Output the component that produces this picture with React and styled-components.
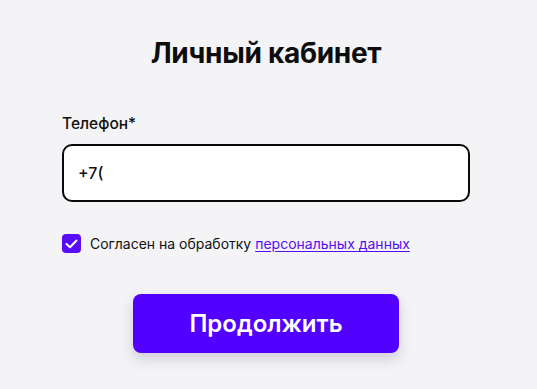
import React, { useState } from "react";
import styled, { createGlobalStyle } from "styled-components";

const GlobalStyle = createGlobalStyle`
  html, body {
    margin: 0;
    padding: 0;
    background: #f4f4f6;
    font-family: Inter, "Noto Sans", sans-serif;
    color: #111;
  }
`;

const Page = styled.div`
  width: 537px;
  height: 389px;
  box-sizing: border-box;
  padding: 36px 0 0 62px;
`;

const Form = styled.form`
  width: 408px;
  display: flex;
  flex-direction: column;
`;

const Title = styled.h1`
  margin: 0;
  font-size: 28px;
  font-weight: 700;
  text-align: center;
  line-height: 34px;
  letter-spacing: -0.3px;
  color: #0d0d0d;
`;

const Label = styled.label`
  margin-top: 44px;
  font-size: 15.5px;
  font-weight: 500;
  line-height: 20px;
  color: #111;
`;

const Input = styled.input`
  margin-top: 10px;
  height: 58px;
  box-sizing: border-box;
  border: 2px solid #0a0a0a;
  border-radius: 10px;
  background: #fff;
  padding: 0 14px;
  font-family: inherit;
  font-size: 16px;
  font-weight: 500;
  color: #111;
  outline: none;
`;

const CheckRow = styled.div`
  margin-top: 32px;
  display: flex;
  align-items: center;
  gap: 9px;
  font-size: 14px;
  font-weight: 400;
  color: #111;
`;

const Box = styled.span`
  width: 19px;
  height: 19px;
  border-radius: 4px;
  background: ${({ checked }) => (checked ? "#5a0cf5" : "#fff")};
  display: flex;
  align-items: center;
  justify-content: center;
  cursor: pointer;
`;

const Link = styled.a`
  color: #5a0cf5;
  text-decoration: underline;
  text-underline-offset: 2px;
`;

const Button = styled.button`
  margin: 41px auto 0;
  width: 266px;
  height: 59px;
  border: none;
  border-radius: 8px;
  background: #5200ff;
  color: #fff;
  font-family: inherit;
  font-size: 24px;
  font-weight: 600;
  box-shadow: 0 6px 14px rgba(40, 20, 90, 0.18);
  cursor: pointer;
`;

export default function App() {
  const [checked, setChecked] = useState(true);
  return (
    <Page>
      <GlobalStyle />
      <Form onSubmit={(e) => e.preventDefault()}>
        <Title>Личный кабинет</Title>
        <Label>Телефон*</Label>
        <Input defaultValue="+7(" />
        <CheckRow>
          <Box checked={checked} onClick={() => setChecked(!checked)}>
            {checked && (
              <svg width="13" height="10" viewBox="0 0 13 10" fill="none">
                <path d="M1.5 5 L5 8.3 L11.5 1.5" stroke="#fff" strokeWidth="2" strokeLinecap="round" strokeLinejoin="round" />
              </svg>
            )}
          </Box>
          <span>
            Согласен на обработку <Link href="#">персональных данных</Link>
          </span>
        </CheckRow>
        <Button type="submit">Продолжить</Button>
      </Form>
    </Page>
  );
}
